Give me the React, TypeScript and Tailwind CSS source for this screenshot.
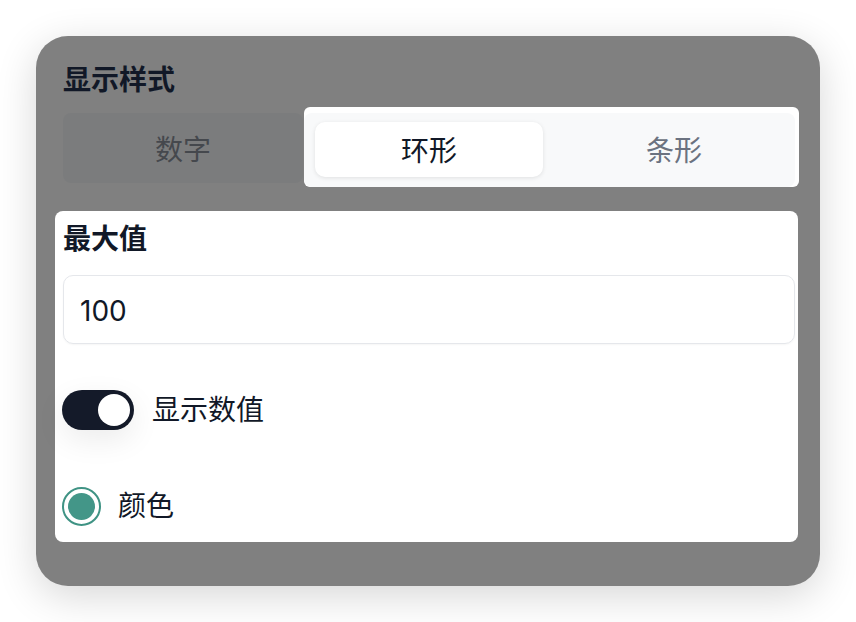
import * as React from 'react';

const FONT = "font-['Inter','Noto_Sans_CJK_SC',sans-serif]";

function Toggle({ on }: { on: boolean }) {
  return (
    <div
      className={
        'flex h-[40px] w-[72px] items-center rounded-full p-[4px] shadow-[0_10px_30px_rgba(0,0,0,0.08)] ' +
        (on ? 'justify-end bg-[#141a29]' : 'justify-start bg-gray-300')
      }
    >
      <div className="h-[32px] w-[32px] rounded-full bg-white" />
    </div>
  );
}

function Radio() {
  return (
    <div className="flex h-[39px] w-[39px] items-center justify-center rounded-full border-2 border-[#3f9384] bg-white">
      <div className="h-[27px] w-[27px] rounded-full bg-[#439688]" />
    </div>
  );
}

export default function App() {
  const [mode, setMode] = React.useState<'num' | 'ring' | 'bar'>('ring');
  const [max, setMax] = React.useState('100');
  const [showValue, setShowValue] = React.useState(true);

  return (
    <div className={`min-h-screen bg-white p-[36px] ${FONT}`}>
      <div className="flex h-[550px] w-[784px] flex-col rounded-[32px] bg-[#808080] pl-[27px] pr-[21px] pt-[24px] shadow-[0_10px_40px_rgba(0,0,0,0.16)]">
        <div className="h-[40px] text-[28px] font-bold leading-[40px] text-[#111827]">显示样式</div>

        {/* segmented */}
        <div className="mt-[7px] flex h-[80px]">
          <button
            type="button"
            onClick={() => setMode('num')}
            className="mt-[6px] h-[70px] w-[240px] rounded-lg bg-[#7b7c7d] pt-[4px] text-[28px] text-[#45484d]"
          >
            数字
          </button>
          <div className="ml-[1px] flex-1 rounded-md bg-white pt-[6px] pr-[4px]">
            <div className="flex h-[74px] items-start rounded-lg bg-[#f8f9fa] pl-[11px] pt-[9px]">
              <button
                type="button"
                onClick={() => setMode('ring')}
                className={
                  'h-[55px] w-[228px] rounded-[10px] pt-[3px] text-[28px] ' +
                  (mode === 'ring'
                    ? 'bg-white text-[#111827] shadow-[0_1px_4px_rgba(0,0,0,0.1)]'
                    : 'text-[#6b7280]')
                }
              >
                环形
              </button>
              <button
                type="button"
                onClick={() => setMode('bar')}
                className="h-[55px] flex-1 pl-[10px] pt-[3px] text-[28px] text-[#6b7280]"
              >
                条形
              </button>
            </div>
          </div>
        </div>

        {/* panel */}
        <div className="mt-[24px] -ml-[8px] flex h-[331px] w-[743px] flex-col rounded-lg bg-white pl-[8px] pr-[3px] pt-[8px]">
          <div className="h-[40px] text-[28px] font-bold leading-[40px] text-[#111827]">最大值</div>
          <input
            value={max}
            onChange={(e) => setMax(e.target.value)}
            className="mt-[16px] h-[69px] w-full rounded-[10px] border border-gray-200 px-[16px] pt-[2px] text-[28px] text-[#111827] shadow-[0_1px_2px_rgba(0,0,0,0.04)] outline-none"
          />

          <label className="mt-[46px] -ml-[1px] flex items-center gap-[18px]" onClick={() => setShowValue((v) => !v)}>
            <Toggle on={showValue} />
            <span className="text-[28px] leading-[40px] text-[#111827]">显示数值</span>
          </label>

          <div className="mt-[56px] -ml-[1px] flex items-center gap-[17px]">
            <Radio />
            <span className="text-[28px] leading-[40px] text-[#111827]">颜色</span>
          </div>
        </div>
      </div>
    </div>
  );
}
